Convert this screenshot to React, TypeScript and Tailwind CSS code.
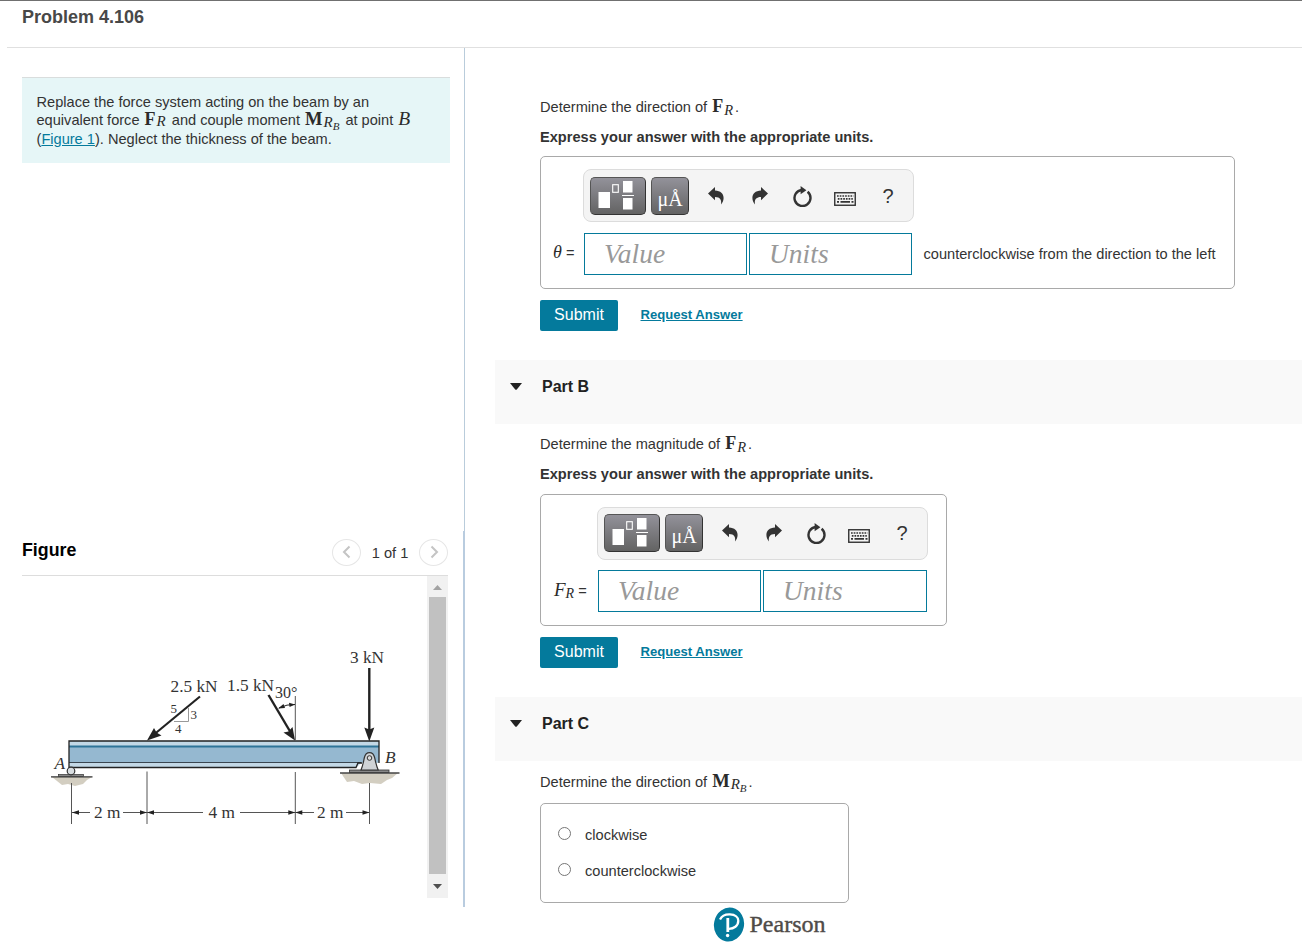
import type { ReactNode } from "react";

function Sym({ children }: { children: ReactNode }) {
  return (
    <span className="font-['Liberation_Serif',serif] leading-[0] text-[#2b2b2b]">{children}</span>
  );
}

function ForceR({ inline = false }: { inline?: boolean }) {
  return (
    <Sym>
      <b className={inline ? "ml-px text-[18px] tracking-[1px]" : "ml-px text-[18px] tracking-[1px]"}>F</b>
      <i className={inline ? "align-[-1px] text-[15px]" : "align-[-3px] text-[14.5px]"}>R</i>
    </Sym>
  );
}

function MomentRB() {
  return (
    <Sym>
      <b className="text-[18.5px] tracking-[1px]">M</b>
      <i className="align-[-1.5px] text-[15px]">R</i>
      <i className="align-[-5px] text-[11px]">B</i>
    </Sym>
  );
}

function UndoIcon({ flip = false }: { flip?: boolean }) {
  return (
    <svg
      viewBox="0 0 16 18"
      className={flip ? "h-[18px] w-4 -scale-x-100" : "h-[18px] w-4"}
      fill="#333"
    >
      <path d="M0 6.6 7 0v3.6c5.6.2 8.6 3.2 8.6 7.4 0 2.6-1 4.6-2.6 6.4.7-4.4-.5-7.4-6-7.5v3.4z" />
    </svg>
  );
}

function ResetIcon() {
  return (
    <svg viewBox="0 0 20 21" className="h-[21px] w-5" fill="none">
      <path d="M15.6 5.8A8 8 0 1 1 9.8 4" stroke="#333" strokeWidth="2.4" />
      <path d="M8.6 0 14.4 4.2 8.6 8.2z" fill="#333" />
    </svg>
  );
}

function KeyboardIcon() {
  return (
    <svg viewBox="0 0 22 14" className="h-3.5 w-[22px]" fill="none" stroke="#333">
      <rect x=".75" y=".75" width="20.5" height="12.5" strokeWidth="1.4" />
      <path d="M3 4h16.5M3.8 6.8h15" strokeWidth="1.7" strokeDasharray="1.7 1" />
      <path d="M3 9.8h2M6.5 9.8h9.5M17.5 9.8h2" strokeWidth="1.7" />
    </svg>
  );
}

const toolButton =
  "flex h-[38px] items-center justify-center rounded-[5px] border border-[#555] border-r-[#333] border-b-[#333] bg-linear-to-b from-[#93929a] to-[#636363]";

function Toolbar({ tight = false }: { tight?: boolean }) {
  return (
    <div
      className={`${tight ? "pt-[6px]" : "pt-[7px]"} flex h-[53px] w-[331px] rounded-[8px] border border-[#dcdcdc] bg-[#f4f4f4] pl-1.5`}
    >
      <button className={`${toolButton} w-14`}>
        <svg viewBox="0 0 56 38" className="h-[38px] w-14 shrink-0" fill="#fff">
          <rect x="8.5" y="15" width="11.5" height="16" />
          <rect x="22.7" y="7.7" width="5.6" height="7.6" fill="none" stroke="#fff" strokeWidth="1.1" />
          <rect x="33" y="4" width="9.5" height="11.5" />
          <rect x="32" y="18" width="12" height="1" />
          <rect x="33" y="21" width="9.5" height="11.5" />
        </svg>
      </button>
      <button className={`${toolButton} ml-[5px] w-[38px] pt-1.5`}>
        <span className="font-['Liberation_Serif',serif] text-[20px] leading-none text-white">μÅ</span>
      </button>
      <div className="ml-[19px] flex pt-[10px]">
        <UndoIcon />
      </div>
      <div className="ml-[28px] flex pt-[10px]">
        <UndoIcon flip />
      </div>
      <div className="ml-[24px] flex pt-[8.5px]">
        <ResetIcon />
      </div>
      <div className="ml-[22px] flex pt-[15px]">
        <KeyboardIcon />
      </div>
      <div className="ml-[26.5px] pt-[9px] text-[20px] leading-5 text-[#333]">?</div>
    </div>
  );
}

const field =
  "flex h-[42px] items-center border border-[#057a9b] bg-white pl-[19px] font-['Liberation_Serif',serif] text-[27.5px] leading-none text-[#999] italic";

function Fields() {
  return (
    <div className="flex gap-0.5">
      <div className={`${field} w-[163px]`}>Value</div>
      <div className={`${field} flex-1`}>Units</div>
    </div>
  );
}

function Actions() {
  return (
    <div className="mt-[11px] flex h-[31px] items-center">
      <button className="h-[31px] w-[78px] rounded-[2px] bg-[#047a9c] pb-px text-[16px] text-white">
        Submit
      </button>
      <a className="ml-[22.5px] pb-px text-[13.1px] font-bold text-[#047a9c] underline">Request Answer</a>
    </div>
  );
}

function PartHeader({ title }: { title: string }) {
  return (
    <div className="mt-[29px] flex h-16 items-center bg-[#f9f9f9] pb-3 pl-[15px]">
      <svg viewBox="0 0 12 7" className="h-[7px] w-3" fill="#222">
        <path d="M0 0h12L7 6.3a1.4 1.4 0 0 1-2 0z" />
      </svg>
      <h2 className="ml-5 pt-0.5 text-[16px] font-bold text-[#222]">{title}</h2>
    </div>
  );
}

function Chevron({ d }: { d: string }) {
  return (
    <button className="flex h-[27px] w-[29px] items-center justify-center rounded-[50%] border border-[#e6e6e6]">
      <svg viewBox="0 0 10 14" className="mb-px h-3.5 w-2.5" fill="none" stroke="#c4c4c4" strokeWidth="2">
        <path d={d} />
      </svg>
    </button>
  );
}

function BeamFigure() {
  return (
    <svg
      viewBox="22 576 405 322"
      className="h-[322px] w-[405px] font-['Liberation_Serif',serif]"
      fill="#333"
      fontSize="17.3"
    >
      {/* ground */}
      <path d="M52 777h40l-5 3-4 4-8 2-7-2-6 1-5-4z" fill="#d3cec1" />
      <path d="M341 773h57l-6 5-5 2-6 4-11-1-8 1-8-3-7 1z" fill="#d3cec1" />
      {/* beam */}
      <path d="M69 741h310v22H361l-4.5 4.5H69z" fill="#c3d8e6" />
      <rect x="69" y="747" width="310" height="15.5" fill="#95b8d0" />
      <path d="M69 746.5h310" stroke="#2f7498" strokeWidth="2" />
      <path d="M69 762.5h292" stroke="#3a4650" strokeWidth="1" />
      <path d="M379 763v-22H69v26.5h287l2-4.5h4" fill="none" stroke="#222" strokeWidth="1.3" />
      {/* roller at A */}
      <path d="M51 776.8h41.5" stroke="#333" strokeWidth="1.3" />
      <rect x="58.5" y="774.5" width="25" height="2" fill="#888" stroke="#333" strokeWidth=".7" />
      <circle cx="71" cy="771" r="3.8" fill="#d8dde0" stroke="#333" strokeWidth="1.2" />
      {/* pin at B */}
      <path d="M340 773h59.5" stroke="#444" strokeWidth="1.5" />
      <rect x="349.5" y="770" width="39.5" height="2.5" fill="#888" stroke="#333" strokeWidth=".8" />
      <path
        d="M361 770c1.8-4 2.4-8 3.4-12.5 1.6-6.5 8.6-6.5 10.2 0 1.1 4.5 1.7 8.5 3.6 12.5z"
        fill="#cfd3d6"
        stroke="#333"
        strokeWidth="1.2"
      />
      <circle cx="369.5" cy="758" r="2.3" fill="#ddd" stroke="#333" strokeWidth="1" />
      {/* extension and dimension lines */}
      <g stroke="#555" strokeWidth="1">
        <path d="M71.5 783v41M147 771.5v52.5M295.3 772v52M295.3 696v45M369.5 783v41" />
        <path d="M72 812.5h18M123 812.5h80M240 812.5h74M346 812.5h23" />
      </g>
      <g fill="#222">
        <path d="M72 812.5l7-2.2v4.4zM147 812.5l-7-2.2v4.4zM147 812.5l7-2.2v4.4z" />
        <path d="M295.3 812.5l-7-2.2v4.4zM295.3 812.5l7-2.2v4.4zM369.5 812.5l-7-2.2v4.4z" />
      </g>
      <text x="94" y="818">2 m</text>
      <text x="208.5" y="818">4 m</text>
      <text x="317" y="818">2 m</text>
      {/* 2.5 kN with its slope triangle */}
      <path d="M188.5 708v13.5H174" fill="none" stroke="#999" strokeWidth="1" />
      <path d="M200 696.5 154 734.5" stroke="#222" strokeWidth="2.2" />
      <path d="M147 740.5 154 728 156.5 732.5 161.5 735.5z" fill="#222" />
      <text x="170.5" y="692">2.5 kN</text>
      <text x="170.5" y="713" fontSize="13">5</text>
      <text x="190.5" y="719" fontSize="13">3</text>
      <text x="175" y="733" fontSize="13">4</text>
      {/* 1.5 kN */}
      <path d="M268.5 695 291 733" stroke="#222" strokeWidth="2.4" />
      <path d="M295 740.5 283.5 732.5 288.5 731.5 292.5 727z" fill="#222" />
      <path d="M279 708q8-4 16-3.5" fill="none" stroke="#222" strokeWidth="1" />
      <path d="M278 708.5l5.5-4.5 1.5 4zM295 704.5l-6-1.8.6 4.2z" fill="#222" />
      <text x="227" y="691">1.5 kN</text>
      <text x="275" y="698" fontSize="16">30°</text>
      {/* 3 kN */}
      <path d="M369.3 668v64" stroke="#222" strokeWidth="2.4" />
      <path d="M369.3 741.5 364.3 727.5 369.3 729.5 374.3 727.5z" fill="#222" />
      <text x="350" y="663">3 kN</text>
      <text x="54.5" y="769" fontStyle="italic">A</text>
      <text x="385" y="763" fontStyle="italic">B</text>
    </svg>
  );
}

function LeftPane() {
  return (
    <section className="w-[463px] pt-[29px] pl-[22px]">
      <div className="h-[86px] w-[428px] border-t border-[#d9dddd] bg-[#e6f6f7] pt-[15px] pl-[14.5px] whitespace-nowrap">
        <p className="h-[18px] leading-[18px]">Replace the force system acting on the beam by an</p>
        <p className="h-[19px] leading-[18px]">
          equivalent force <ForceR inline />
          <span className="pl-[6px]">and couple moment</span>{" "}
          <span className="pl-px">
            <MomentRB />
          </span>
          <span className="pl-[6px]">at point</span>{" "}
          <Sym>
            <i className="ml-px text-[19.5px]">B</i>
          </Sym>
        </p>
        <p className="h-[18px] leading-[18px]">
          (<a className="text-[#047a9c] underline">Figure 1</a>). Neglect the thickness of the beam.
        </p>
      </div>

      <div className="mt-[368px] flex h-[45px] w-[426px] items-start border-b border-[#ddd] pt-2">
        <h2 className="text-[17.8px] leading-[22px] font-bold text-black">Figure</h2>
        <div className="ml-auto flex items-center">
          <Chevron d="M7.5 1.5 2 7l5.5 5.5" />
          <span className="w-[58px] pt-[3px] text-center">1 of 1</span>
          <Chevron d="M2.5 1.5 8 7l-5.5 5.5" />
        </div>
      </div>
      <div className="flex h-[322px] w-[426px]">
        <BeamFigure />
        <div className="flex w-[21px] flex-col items-center bg-[#f1f1f1]">
          <svg viewBox="0 0 9 5" className="mt-[9px] h-[5px] w-[9px]" fill="#a3a3a3">
            <path d="M0 5 4.5 0 9 5z" />
          </svg>
          <div className="mt-[7px] h-[277px] w-[17px] bg-[#c1c1c1]" />
          <svg viewBox="0 0 9 5" className="mt-[10px] h-[5px] w-[9px]" fill="#505050">
            <path d="M0 0h9L4.5 5z" />
          </svg>
        </div>
      </div>
    </section>
  );
}

const answerBox = "flex w-fit flex-col rounded-[5px] border border-[#a9a9a9]";

export default function App() {
  return (
    <div className="h-[952px] w-[1302px] overflow-hidden border-t border-[#707070] bg-white font-['Liberation_Sans',Arial,sans-serif] text-[14.6px] text-[#333]">
      <header className="ml-[7px] h-[47px] border-b border-[#e0e0e0] pt-[5px] pl-[15px]">
        <h1 className="text-[18px] leading-[22px] font-bold text-[#484848]">Problem 4.106</h1>
      </header>

      <div className="flex h-[859px]">
        <LeftPane />
        <div className="flex w-0.5 flex-col items-end">
          <div className="h-[483px] w-px bg-[#b9ccdb]" />
          <div className="w-0.5 flex-1 bg-[#b9ccdf]" />
        </div>

        <main className="ml-[30px] flex-1 pt-[44px]">
          <div className="pl-[45px]">
            <p className="h-[30px] leading-[30px]">
              Determine the direction of <ForceR />
              <span className="pl-[2px]">.</span>
            </p>
            <p className="h-[30px] leading-[30px] font-bold">Express your answer with the appropriate units.</p>
            <div className={`${answerBox} mt-1 h-[133px] pt-3 pr-[18px]`}>
              <div className="ml-[42px]">
                <Toolbar />
              </div>
              <div className="mt-[11px] flex items-center">
                <span className="w-[43px] pl-[12px]">
                  <Sym>
                    <i className="text-[18px]">θ</i>
                  </Sym>{" "}
                  =
                </span>
                <div className="w-[328px]">
                  <Fields />
                </div>
                <span className="ml-[11.5px] pt-0.5 whitespace-nowrap">
                  counterclockwise from the direction to the left
                </span>
              </div>
            </div>
            <Actions />
          </div>

          <PartHeader title="Part B" />
          <div className="pt-[5px] pl-[45px]">
            <p className="h-[30px] leading-[30px]">
              Determine the magnitude of <ForceR />
              <span className="pl-[2px]">.</span>
            </p>
            <p className="h-[30px] leading-[30px] font-bold">Express your answer with the appropriate units.</p>
            <div className={`${answerBox} mt-[5px] h-[132px] pt-3 pr-[18px]`}>
              <div className="ml-[56px]">
                <Toolbar tight />
              </div>
              <div className="mt-[10px] flex items-center">
                <span className="w-[57px] pt-px pl-[13px] whitespace-nowrap">
                  <Sym>
                    <i className="text-[19px]">F</i>
                    <i className="align-[-2px] text-[14px]">R</i>
                  </Sym>{" "}
                  =
                </span>
                <div className="w-[329px]">
                  <Fields />
                </div>
              </div>
            </div>
            <Actions />
          </div>

          <PartHeader title="Part C" />
          <div className="pt-[6px] pl-[45px]">
            <p className="h-[30px] leading-[30px]">
              Determine the direction of{" "}
              <span className="pl-px">
                <MomentRB />
              </span>
              <span className="pl-[2px]">.</span>
            </p>
            <div className="mt-[6px] flex h-[100px] w-[309px] flex-col rounded-[5px] border border-[#a9a9a9] pt-3 pl-[17px]">
              {["clockwise", "counterclockwise"].map((label) => (
                <label key={label} className="flex h-9 items-center">
                  <span className="mb-0.5 size-[13px] rounded-full border border-[#767676] bg-white" />
                  <span className="ml-[14px] pt-[3px]">{label}</span>
                </label>
              ))}
            </div>
          </div>
        </main>
      </div>

      <footer className="flex items-center pl-[713px]">
        <svg viewBox="0 0 32 35" className="h-[35px] w-8" fill="none">
          <ellipse cx="16" cy="17.5" rx="15" ry="17" transform="rotate(12 16 17.5)" fill="#047a9c" />
          <path
            d="M7 12.5C9 8.5 13 7.2 17 7.4c5.2.2 8.3 2.8 8.3 6.4 0 5-4.5 8.2-9.800 8"
            stroke="#fff"
            strokeWidth="2.3"
          />
          <path d="M14.8 11v14" stroke="#fff" strokeWidth="2.8" />
          <circle cx="14.6" cy="28.5" r="1.7" fill="#fff" />
        </svg>
        <span className="ml-[4.5px] font-['Liberation_Serif',serif] text-[24px] leading-[35px] text-[#4f4b48] [-webkit-text-stroke:0.4px_#4f4b48]">
          Pearson
        </span>
      </footer>
    </div>
  );
}
